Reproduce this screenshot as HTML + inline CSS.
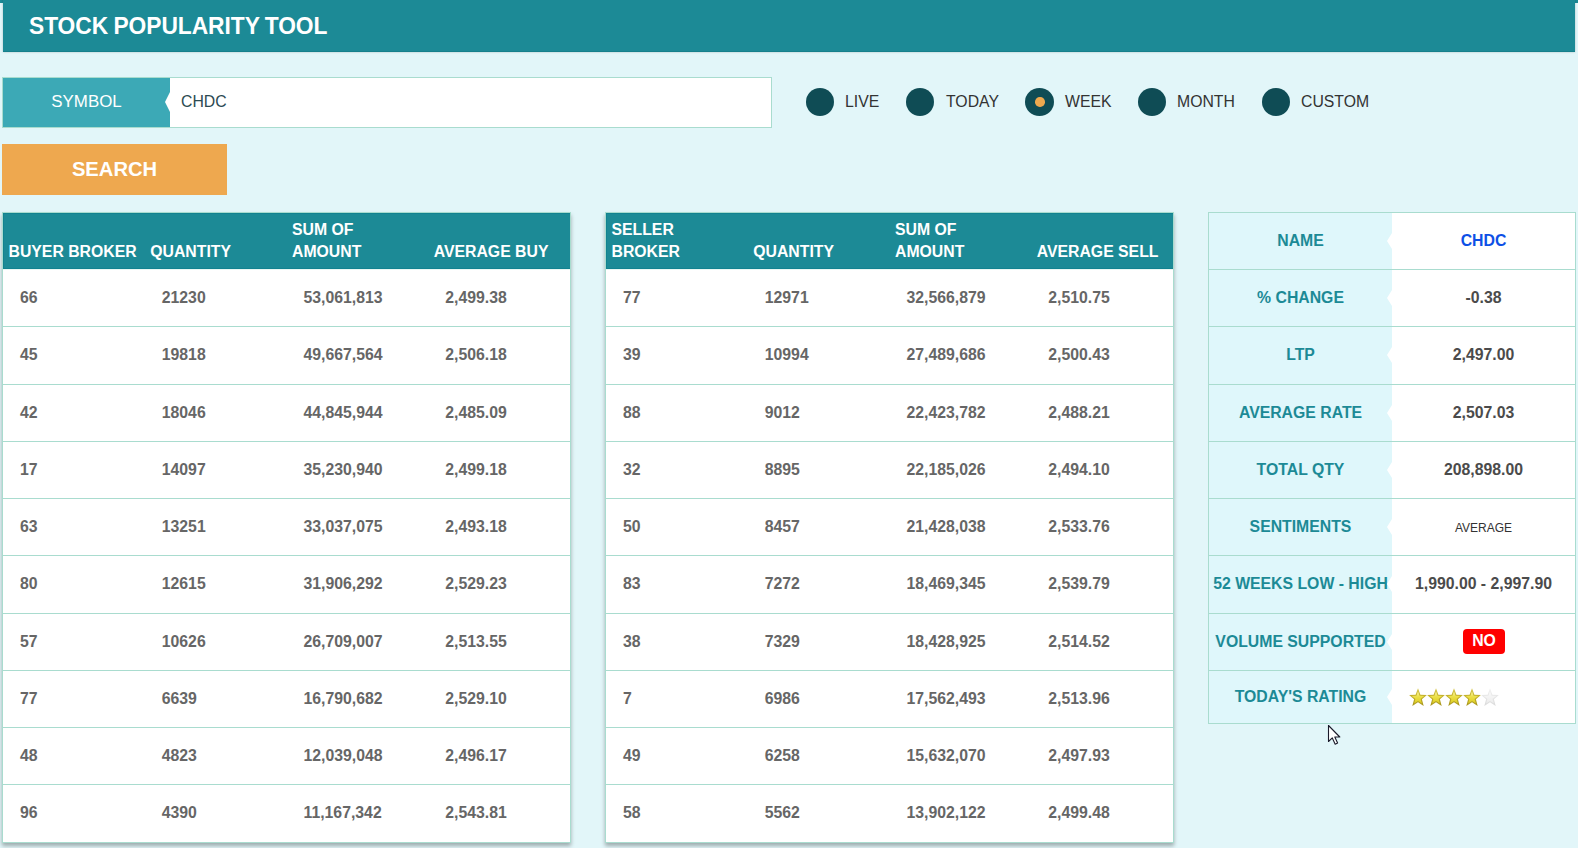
<!DOCTYPE html>
<html>
<head>
<meta charset="utf-8">
<title>Stock Popularity Tool</title>
<style>
html,body{margin:0;padding:0;}
body{width:1578px;height:848px;overflow:hidden;background:#e2f6f9;font-family:"Liberation Sans",sans-serif;position:relative;}
.abs{position:absolute;}
#topstrip{left:0;top:0;width:1578px;height:3px;background:#1c8a96;}
#header{left:3px;top:0;width:1572px;height:52px;background:#1c8a96;box-shadow:0 0 2px rgba(0,0,0,0.22);border-bottom:1px solid #15808c;box-sizing:border-box;}
#header span{position:absolute;left:26px;top:13px;font-size:22.8px;word-spacing:-1px;font-weight:bold;color:#fff;line-height:26px;white-space:nowrap;transform:scaleY(1.07);transform-origin:0 21px;letter-spacing:-0.05px;}
#leftline{display:none;}
#symbox{left:2px;top:77px;width:770px;height:51px;box-sizing:border-box;border:1px solid #a9dccf;background:#fff;}
#symlabel{left:3px;top:78px;width:167px;height:49px;background:#3ca9b6;color:#fff;font-size:16.9px;line-height:47px;text-align:center;}
#symarrow{left:165px;top:92px;width:0;height:0;border-top:10px solid transparent;border-bottom:10px solid transparent;border-right:5px solid #fff;}
#symval{left:181px;top:77px;font-size:15.8px;line-height:49px;color:#2c4a52;}
#search{left:2px;top:144px;width:225px;height:51px;background:#eea84f;color:#fff;font-weight:bold;font-size:20.2px;line-height:50px;text-align:center;}
.radio{width:28px;height:28px;border-radius:50%;background:#0f4c55;top:88px;}
.radio.on{width:29px;}
.radio.on::after{content:"";position:absolute;left:10.25px;top:9.25px;width:9.5px;height:9.5px;border-radius:50%;background:#eea84f;}
.rlabel{top:90px;font-size:15.8px;line-height:24px;color:#333;white-space:nowrap;}
table{border-collapse:separate;border-spacing:0;table-layout:fixed;width:567px;}
.tw{top:212px;width:569px;height:631px;box-sizing:border-box;border:1px solid #a9dccf;background:#fff;box-shadow:0 3px 4px rgba(0,0,0,0.3);}
.bt th{background:#1c8a96;color:#fff;font-size:15.8px;font-weight:bold;text-align:left;vertical-align:bottom;padding:0 0 5px 5.5px;height:56px;line-height:22px;box-sizing:border-box;border-top:1px solid #128290;border-bottom:1px solid #128290;}
.bt th:first-child{border-left:1px solid #128290;padding-left:4.5px;}
.bt td{height:57px;box-sizing:border-box;border-top:1px solid #a9dccf;padding:19px 0 0 17px;font-size:15.8px;line-height:18px;vertical-align:top;font-weight:bold;color:#666;white-space:nowrap;}
.bt tr:first-child td{border-top-color:#e9f7f3;}
.bt tr:nth-child(2) td,.bt tr:nth-child(6) td,.bt tr:nth-child(10) td{height:58px;}
.info{left:1208px;top:212px;width:368px;height:512px;box-sizing:border-box;border:1px solid #a9dccf;border-top:none;background:#fff;}
.info .r{position:relative;height:57px;box-sizing:border-box;border-top:1px solid #a9dccf;}
.info .r:nth-child(3),.info .r:nth-child(7){height:58px;}
.info .r.last{height:53px;}
.info .l{position:absolute;left:0;top:0;bottom:0;width:183px;background:#dff7fb;color:#1c8a96;font-weight:bold;font-size:15.8px;text-align:center;white-space:nowrap;line-height:18px;padding-top:19px;box-sizing:border-box;}
.info .r.last .l{padding-top:17px;}
.info .l::after{content:"";position:absolute;right:0;top:20px;width:0;height:0;border-top:8px solid transparent;border-bottom:8px solid transparent;border-right:5px solid #fff;}
.info .r.last .l::after{top:18px;}
.info .v{position:absolute;left:183px;right:0;top:0;bottom:0;text-align:center;font-weight:bold;font-size:15.8px;color:#4b4b4b;line-height:18px;padding-top:19px;white-space:nowrap;}
.info .v.name{color:#0d50e6;}
.info .v.sent{font-weight:normal;font-size:12px;color:#333;padding-top:20px;}
.no{position:absolute;left:71px;top:15px;background:#ff0000;color:#fff;border-radius:4px;width:42px;height:25px;line-height:24px;font-size:15.8px;font-weight:bold;text-align:center;}
.stars{position:absolute;left:199px;top:16.5px;}
</style>
</head>
<body>
<div id="topstrip" class="abs"></div>
<div id="header" class="abs"><span>STOCK POPULARITY TOOL</span></div>
<div id="leftline" class="abs"></div>

<div id="symbox" class="abs"></div>
<div id="symlabel" class="abs">SYMBOL</div>
<div id="symarrow" class="abs"></div>
<div id="symval" class="abs">CHDC</div>
<div id="search" class="abs">SEARCH</div>

<div class="abs radio" style="left:806px"></div><div class="abs rlabel" style="left:845px">LIVE</div>
<div class="abs radio" style="left:906px"></div><div class="abs rlabel" style="left:946px">TODAY</div>
<div class="abs radio on" style="left:1025px"></div><div class="abs rlabel" style="left:1065px">WEEK</div>
<div class="abs radio" style="left:1138px"></div><div class="abs rlabel" style="left:1177px">MONTH</div>
<div class="abs radio" style="left:1262px"></div><div class="abs rlabel" style="left:1301px">CUSTOM</div>

<div class="abs tw" style="left:2px"><table class="bt buy">
<thead><tr><th>BUYER BROKER</th><th>QUANTITY</th><th>SUM OF<br>AMOUNT</th><th>AVERAGE BUY</th></tr></thead>
<tbody>
<tr><td>66</td><td>21230</td><td>53,061,813</td><td>2,499.38</td></tr>
<tr><td>45</td><td>19818</td><td>49,667,564</td><td>2,506.18</td></tr>
<tr><td>42</td><td>18046</td><td>44,845,944</td><td>2,485.09</td></tr>
<tr><td>17</td><td>14097</td><td>35,230,940</td><td>2,499.18</td></tr>
<tr><td>63</td><td>13251</td><td>33,037,075</td><td>2,493.18</td></tr>
<tr><td>80</td><td>12615</td><td>31,906,292</td><td>2,529.23</td></tr>
<tr><td>57</td><td>10626</td><td>26,709,007</td><td>2,513.55</td></tr>
<tr><td>77</td><td>6639</td><td>16,790,682</td><td>2,529.10</td></tr>
<tr><td>48</td><td>4823</td><td>12,039,048</td><td>2,496.17</td></tr>
<tr><td>96</td><td>4390</td><td>11,167,342</td><td>2,543.81</td></tr>
</tbody></table></div>
<div class="abs tw" style="left:605px"><table class="bt sell">
<thead><tr><th>SELLER<br>BROKER</th><th>QUANTITY</th><th>SUM OF<br>AMOUNT</th><th>AVERAGE SELL</th></tr></thead>
<tbody>
<tr><td>77</td><td>12971</td><td>32,566,879</td><td>2,510.75</td></tr>
<tr><td>39</td><td>10994</td><td>27,489,686</td><td>2,500.43</td></tr>
<tr><td>88</td><td>9012</td><td>22,423,782</td><td>2,488.21</td></tr>
<tr><td>32</td><td>8895</td><td>22,185,026</td><td>2,494.10</td></tr>
<tr><td>50</td><td>8457</td><td>21,428,038</td><td>2,533.76</td></tr>
<tr><td>83</td><td>7272</td><td>18,469,345</td><td>2,539.79</td></tr>
<tr><td>38</td><td>7329</td><td>18,428,925</td><td>2,514.52</td></tr>
<tr><td>7</td><td>6986</td><td>17,562,493</td><td>2,513.96</td></tr>
<tr><td>49</td><td>6258</td><td>15,632,070</td><td>2,497.93</td></tr>
<tr><td>58</td><td>5562</td><td>13,902,122</td><td>2,499.48</td></tr>
</tbody></table></div>

<div class="abs info">
<div class="r"><div class="l">NAME</div><div class="v name">CHDC</div></div>
<div class="r"><div class="l">% CHANGE</div><div class="v">-0.38</div></div>
<div class="r"><div class="l">LTP</div><div class="v">2,497.00</div></div>
<div class="r"><div class="l">AVERAGE RATE</div><div class="v">2,507.03</div></div>
<div class="r"><div class="l">TOTAL QTY</div><div class="v">208,898.00</div></div>
<div class="r"><div class="l">SENTIMENTS</div><div class="v sent">AVERAGE</div></div>
<div class="r"><div class="l">52 WEEKS LOW - HIGH</div><div class="v">1,990.00 - 2,997.90</div></div>
<div class="r"><div class="l">VOLUME SUPPORTED</div><div class="v"><span class="no">NO</span></div></div>
<div class="r last"><div class="l">TODAY'S RATING</div><div class="v"><svg class="stars" style="left:17px" width="92" height="19" viewBox="0 0 92 19"><defs><linearGradient id="g" x1="0" y1="0" x2="0" y2="1"><stop offset="0" stop-color="#d8c848"/><stop offset="0.45" stop-color="#c2b02c"/><stop offset="1" stop-color="#a8961e"/></linearGradient><linearGradient id="gi" x1="0" y1="0" x2="0" y2="1"><stop offset="0" stop-color="#fbf6a8"/><stop offset="0.45" stop-color="#ece048"/><stop offset="1" stop-color="#dccc20"/></linearGradient><linearGradient id="gg" x1="0" y1="0" x2="0" y2="1"><stop offset="0" stop-color="#f2f2f2"/><stop offset="1" stop-color="#dadada"/></linearGradient><linearGradient id="ggi" x1="0" y1="0" x2="0" y2="1"><stop offset="0" stop-color="#fafafa"/><stop offset="1" stop-color="#ececec"/></linearGradient></defs><g transform="translate(0,0)"><path d="M9 0.2 L11.4 6.7 L17.9 7 L12.9 11.3 L14.7 17.9 L9 14.2 L3.3 17.9 L5.1 11.3 L0.1 7 L6.6 6.7 Z" fill="url(#g)"/><path d="M9 3.2 L10.6 7.8 L15.2 8 L11.6 11 L12.9 15.6 L9 13 L5.1 15.6 L6.4 11 L2.8 8 L7.4 7.8 Z" fill="url(#gi)"/></g><g transform="translate(18,0)"><path d="M9 0.2 L11.4 6.7 L17.9 7 L12.9 11.3 L14.7 17.9 L9 14.2 L3.3 17.9 L5.1 11.3 L0.1 7 L6.6 6.7 Z" fill="url(#g)"/><path d="M9 3.2 L10.6 7.8 L15.2 8 L11.6 11 L12.9 15.6 L9 13 L5.1 15.6 L6.4 11 L2.8 8 L7.4 7.8 Z" fill="url(#gi)"/></g><g transform="translate(36,0)"><path d="M9 0.2 L11.4 6.7 L17.9 7 L12.9 11.3 L14.7 17.9 L9 14.2 L3.3 17.9 L5.1 11.3 L0.1 7 L6.6 6.7 Z" fill="url(#g)"/><path d="M9 3.2 L10.6 7.8 L15.2 8 L11.6 11 L12.9 15.6 L9 13 L5.1 15.6 L6.4 11 L2.8 8 L7.4 7.8 Z" fill="url(#gi)"/></g><g transform="translate(54,0)"><path d="M9 0.2 L11.4 6.7 L17.9 7 L12.9 11.3 L14.7 17.9 L9 14.2 L3.3 17.9 L5.1 11.3 L0.1 7 L6.6 6.7 Z" fill="url(#g)"/><path d="M9 3.2 L10.6 7.8 L15.2 8 L11.6 11 L12.9 15.6 L9 13 L5.1 15.6 L6.4 11 L2.8 8 L7.4 7.8 Z" fill="url(#gi)"/></g><g transform="translate(72,0)"><path d="M9 0.2 L11.4 6.7 L17.9 7 L12.9 11.3 L14.7 17.9 L9 14.2 L3.3 17.9 L5.1 11.3 L0.1 7 L6.6 6.7 Z" fill="url(#gg)"/><path d="M9 3.2 L10.6 7.8 L15.2 8 L11.6 11 L12.9 15.6 L9 13 L5.1 15.6 L6.4 11 L2.8 8 L7.4 7.8 Z" fill="url(#ggi)"/></g></svg></div></div>
</div>

<svg class="abs" style="left:1327px;top:724px" width="16" height="22" viewBox="0 0 16 22"><path d="M1.5 1.5 L1.5 17.5 L5.3 13.9 L8.2 20.2 L10.6 19.1 L7.8 13 L12.8 13 Z" fill="#fff" stroke="#1a1a2a" stroke-width="1.1" stroke-linejoin="round"/></svg>

</body>
</html>
